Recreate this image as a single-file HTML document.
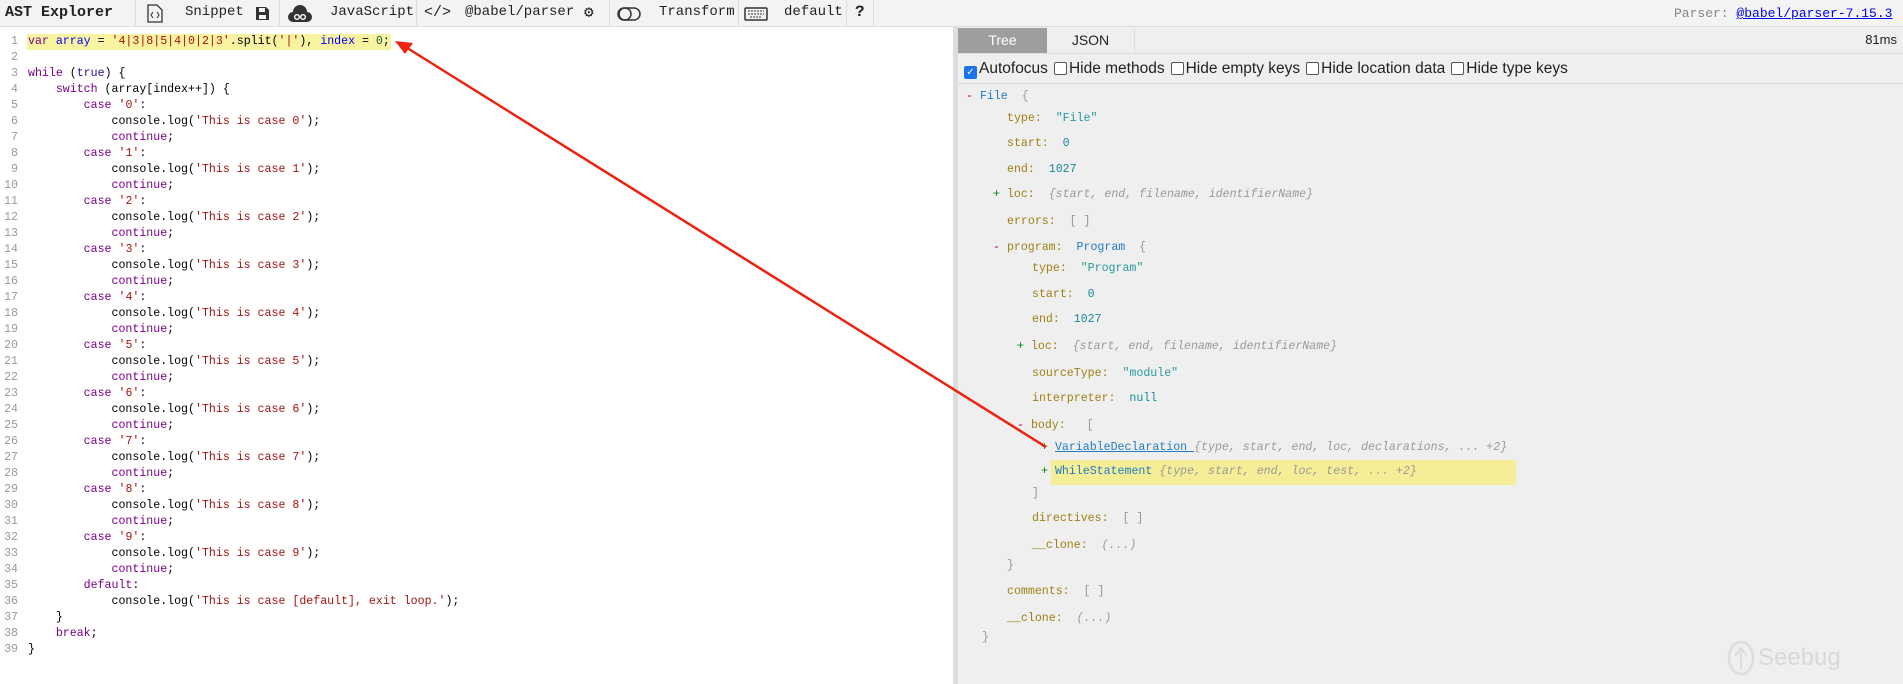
<!DOCTYPE html>
<html><head><meta charset="utf-8"><style>
*{margin:0;padding:0;box-sizing:border-box}
body{width:1903px;height:684px;overflow:hidden;background:#fff;font-family:"Liberation Mono",monospace;position:relative}
#tb{position:absolute;left:0;top:0;width:1903px;height:27px;background:#f3f3f3;border-bottom:1px solid #ddd}
#tb span{position:absolute;top:4px;font-size:14px;color:#222;white-space:nowrap}
.sep{position:absolute;top:0;width:1px;height:27px;background:#ddd}
#code{position:absolute;left:0;top:27px;width:953px;height:657px;background:#fff}
.ln{position:absolute;left:0;width:953px;height:16px;font-size:11.6px;line-height:16px;white-space:pre;color:#000}
.ln .n{position:absolute;left:2px;width:16px;text-align:right;color:#999}
.ln .t{position:absolute;left:28px}
.k{color:#708}.v{color:#00f}.s{color:#a11}.m{color:#164}.a{color:#219}
#div{position:absolute;left:953px;top:27px;width:5px;height:657px;background:#ddd}
#rp{position:absolute;left:958px;top:27px;width:945px;height:657px;background:#efefef}
.tr{position:absolute;font-size:11.6px;white-space:pre;line-height:16px}
.key{color:#a08015}.str{color:#2a9a9a}.num{color:#1a8a9a}.typ{color:#1e7bc4}.ph{color:#999;font-style:italic}.br{color:#999}
.pm{color:#c00}.pp{color:#080}
.cb{display:inline-block;width:13px;height:13px;border:1px solid #555;border-radius:2px;vertical-align:-2px;background:#fff;margin:0 2px 0 6px}
</style></head><body>
<div id="tb">
<span style="left:5px;font-weight:bold;font-size:15px;top:4px">AST Explorer</span>
<div class="sep" style="left:135px"></div>
<svg style="position:absolute;left:147px;top:4px" width="16" height="19" viewBox="0 0 16 19"><path d="M1 1h9l5 5v12H1z" fill="none" stroke="#333" stroke-width="1.3"/><path d="M6 8l-2 3 2 3M10 8l2 3-2 3" fill="none" stroke="#333"/></svg>
<span style="left:185px">Snippet</span>
<svg style="position:absolute;left:256px;top:7px" width="13" height="13" viewBox="0 0 13 13"><path d="M0 0h10l3 3v10H0z" fill="#333"/><rect x="3" y="1" width="6" height="4" fill="#f3f3f3"/><rect x="3" y="8" width="7" height="4" fill="#f3f3f3"/></svg>
<div class="sep" style="left:279px"></div>
<svg style="position:absolute;left:288px;top:4px" width="24" height="19" viewBox="0 0 24 19"><path d="M5 18a5 5 0 0 1 0-10 7 7 0 0 1 14 0 5 5 0 0 1 0 10z" fill="#333"/><circle cx="9" cy="13" r="2.3" fill="none" stroke="#fff" stroke-width="1.4"/><circle cx="15" cy="13" r="2.3" fill="none" stroke="#fff" stroke-width="1.4"/></svg>
<span style="left:330px">JavaScript</span>
<div class="sep" style="left:416px"></div>
<span style="left:424px;font-size:15px">&lt;/&gt;</span>
<span style="left:465px">@babel/parser</span>
<span style="left:584px;font-size:16px;top:2px">⚙</span>
<div class="sep" style="left:609px"></div>
<svg style="position:absolute;left:617px;top:7px" width="24" height="14"><rect x="1" y="1" width="22" height="12" rx="6" fill="none" stroke="#333" stroke-width="1.5"/><circle cx="8" cy="7" r="6" fill="none" stroke="#333" stroke-width="1.5"/></svg>
<span style="left:659px">Transform</span>
<div class="sep" style="left:738px"></div>
<svg style="position:absolute;left:744px;top:7px" width="24" height="14"><rect x="1" y="1" width="22" height="12" rx="1" fill="none" stroke="#333" stroke-width="1.5"/><path d="M4 4h16M4 7h16M6 10h12" stroke="#333" stroke-dasharray="2 1"/></svg>
<span style="left:784px">default</span>
<div class="sep" style="left:846px"></div>
<span style="left:855px;font-weight:bold;font-size:16px;top:3px">?</span>
<div class="sep" style="left:873px"></div>
<span style="left:1674px;color:#888;font-size:13px;top:6px">Parser: <u style="color:#00e">@babel/parser-7.15.3</u></span>
</div>

<div id="code">
<div style="position:absolute;left:27px;top:7px;width:364px;height:16px;background:#f8f3a0"></div>
</div>
<div id="lines"></div>

<div id="div"></div>
<div id="rp">
<div style="position:absolute;left:0;top:1px;width:89px;height:25px;background:#9e9e9e;color:#fff;font:14px 'Liberation Sans',sans-serif;text-align:center;line-height:25px">Tree</div>
<div style="position:absolute;left:89px;top:1px;width:88px;height:25px;border-right:1px solid #ddd;color:#222;font:14px 'Liberation Sans',sans-serif;text-align:center;line-height:25px">JSON</div>
<div style="position:absolute;right:6px;top:5px;font:13px 'Liberation Sans',sans-serif;color:#222">81ms</div>
<div style="position:absolute;left:0;top:26px;width:945px;border-top:1px solid #ddd"></div>
<div style="position:absolute;left:6px;top:33px;font:15.5px 'Liberation Sans',sans-serif;color:#222;white-space:nowrap">
<span style="display:inline-block;width:13px;height:13px;background:#1a73e8;border-radius:2px;vertical-align:-2px;color:#fff;font-size:10px;line-height:13px;text-align:center;margin-right:2px">✓</span>Autofocus<span class="cb"></span>Hide methods<span class="cb"></span>Hide empty keys<span class="cb"></span>Hide location data<span class="cb"></span>Hide type keys</div>
<div style="position:absolute;left:0;top:56px;width:945px;border-top:1px solid #ddd"></div>
<div style="position:absolute;left:93px;top:433px;width:465px;height:25px;background:#f5ee96"></div>
<div id="tree"></div>
<svg style="position:absolute;left:768px;top:613px" width="30" height="36"><ellipse cx="15" cy="18" rx="12" ry="16" fill="none" stroke="#ddd" stroke-width="2.5"/><path d="M15 8v22M9 16l6-8 6 8" fill="none" stroke="#ddd" stroke-width="2"/></svg>
<div style="position:absolute;left:800px;top:617px;font:24px 'Liberation Sans',sans-serif;color:#d8d8d8">Seebug</div>
</div>

<svg style="position:absolute;left:0;top:0" width="1903" height="684"><line x1="1046" y1="447" x2="404" y2="46" stroke="#e21" stroke-width="2.5"/><path d="M395 41l18 2-8 11z" fill="#e21"/></svg>

<script>
var L=[
"<span class=k>var</span> <span class=v>array</span> = <span class=s>'4|3|8|5|4|0|2|3'</span>.split(<span class=s>'|'</span>), <span class=v>index</span> = <span class=m>0</span>;",
"",
"<span class=k>while</span> (<span class=a>true</span>) {",
"    <span class=k>switch</span> (array[index++]) {"];
for(var i=0;i<10;i++){L.push("        <span class=k>case</span> <span class=s>'"+i+"'</span>:");L.push("            console.log(<span class=s>'This is case "+i+"'</span>);");L.push("            <span class=k>continue</span>;");}
L.push("        <span class=k>default</span>:");
L.push("            console.log(<span class=s>'This is case [default], exit loop.'</span>);");
L.push("    }");L.push("    <span class=k>break</span>;");L.push("}");
var h="";for(var i=0;i<L.length;i++)h+='<div class="ln" style="top:'+(34+i*16)+'px"><span class=n>'+(i+1)+'</span><span class=t>'+L[i]+'</span></div>';
document.getElementById('lines').innerHTML=h;
var T=[
[97,966,'<span class=pm>-</span> <span class=typ>File</span>  <span class=br>{</span>'],
[119,1007,'<span class=key>type:</span>  <span class=str>"File"</span>'],
[144,1007,'<span class=key>start:</span>  <span class=num>0</span>'],
[170,1007,'<span class=key>end:</span>  <span class=num>1027</span>'],
[195,993,'<span class=pp>+</span> <span class=key>loc:</span>  <span class=ph>{start, end, filename, identifierName}</span>'],
[222,1007,'<span class=key>errors:</span>  <span class=br>[ ]</span>'],
[248,993,'<span class=pm>-</span> <span class=key>program:</span>  <span class=typ>Program</span>  <span class=br>{</span>'],
[269,1032,'<span class=key>type:</span>  <span class=str>"Program"</span>'],
[295,1032,'<span class=key>start:</span>  <span class=num>0</span>'],
[320,1032,'<span class=key>end:</span>  <span class=num>1027</span>'],
[347,1017,'<span class=pp>+</span> <span class=key>loc:</span>  <span class=ph>{start, end, filename, identifierName}</span>'],
[374,1032,'<span class=key>sourceType:</span>  <span class=str>"module"</span>'],
[399,1032,'<span class=key>interpreter:</span>  <span class=num>null</span>'],
[426,1017,'<span class=pm>-</span> <span class=key>body:</span>   <span class=br>[</span>'],
[448,1041,'<span class=pp>+</span> <u class=typ>VariableDeclaration </u><span class=ph>{type, start, end, loc, declarations, ... +2}</span>'],
[472,1041,'<span class=pp>+</span> <span class=typ>WhileStatement</span> <span class=ph>{type, start, end, loc, test, ... +2}</span>'],
[494,1032,'<span class=br>]</span>'],
[519,1032,'<span class=key>directives:</span>  <span class=br>[ ]</span>'],
[546,1032,'<span class=key>__clone:</span>  <span class=ph>(...)</span>'],
[566,1007,'<span class=br>}</span>'],
[592,1007,'<span class=key>comments:</span>  <span class=br>[ ]</span>'],
[619,1007,'<span class=key>__clone:</span>  <span class=ph>(...)</span>'],
[638,982,'<span class=br>}</span>']];
var g="";T.forEach(function(r){g+='<div class="tr" style="top:'+(r[0]-27-8)+'px;left:'+(r[1]-958)+'px">'+r[2]+'</div>'});
document.getElementById('tree').innerHTML=g;
</script>
</body></html>
